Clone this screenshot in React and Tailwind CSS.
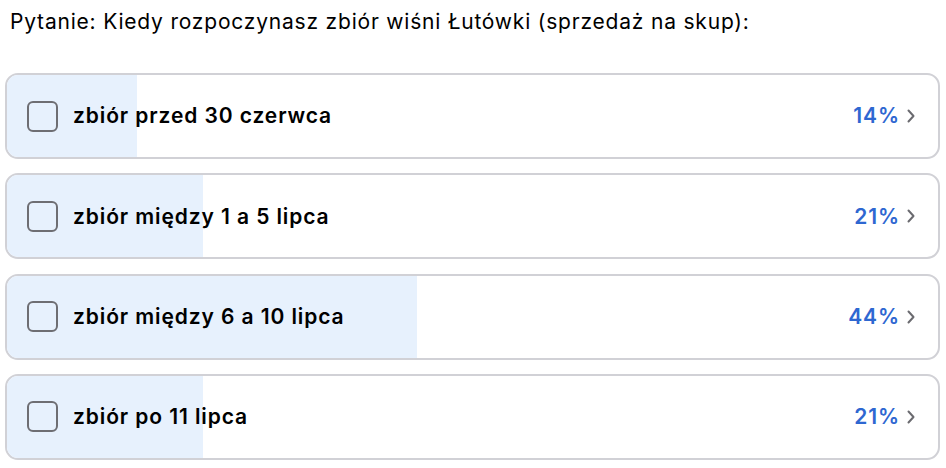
import React from 'react';

const options = [
  { label: 'zbiór przed 30 czerwca', pct: 14 },
  { label: 'zbiór między 1 a 5 lipca', pct: 21 },
  { label: 'zbiór między 6 a 10 lipca', pct: 44 },
  { label: 'zbiór po 11 lipca', pct: 21 },
];

const Chevron = () => (
  <svg width="10" height="16" viewBox="0 0 10 16" fill="none" className="ml-[6px]">
    <path d="M2.5 2.5 L7.5 8 L2.5 13.5" stroke="#6b6b70" strokeWidth="2" strokeLinecap="round" strokeLinejoin="round" />
  </svg>
);

const Option = ({ label, pct }) => (
  <div className="relative h-[86px] rounded-[13px] border-2 border-[#d1d1d6] bg-white overflow-hidden">
    <div className="absolute inset-y-0 left-0 bg-[#e7f1fd]" style={{ width: `${pct}%` }} />
    <div className="relative flex items-center h-full pl-[20px] pr-[22px]">
      <div className="w-[31px] h-[31px] rounded-[6px] border-2 border-[#6e6e73] shrink-0" />
      <span className="ml-[15px] text-[21px] font-semibold tracking-[0.9px] text-black">{label}</span>
      <span className="ml-auto text-[21px] font-semibold tracking-[0.9px] text-[#2e67d1]">{pct}%</span>
      <Chevron />
    </div>
  </div>
);

export default function App() {
  return (
    <div className="w-[946px] h-[468px] bg-white pl-[5px] pr-[6px] font-['Inter',sans-serif]">
      <p className="pl-[5px] pt-[8px] text-[21px] tracking-[0.8px] text-black leading-[28px]">
        Pytanie: Kiedy rozpoczynasz zbiór wiśni Łutówki (sprzedaż na skup):
      </p>
      <div className="mt-[37px] flex flex-col gap-[14.3px]">
        {options.map((o) => (
          <Option key={o.label} {...o} />
        ))}
      </div>
    </div>
  );
}
